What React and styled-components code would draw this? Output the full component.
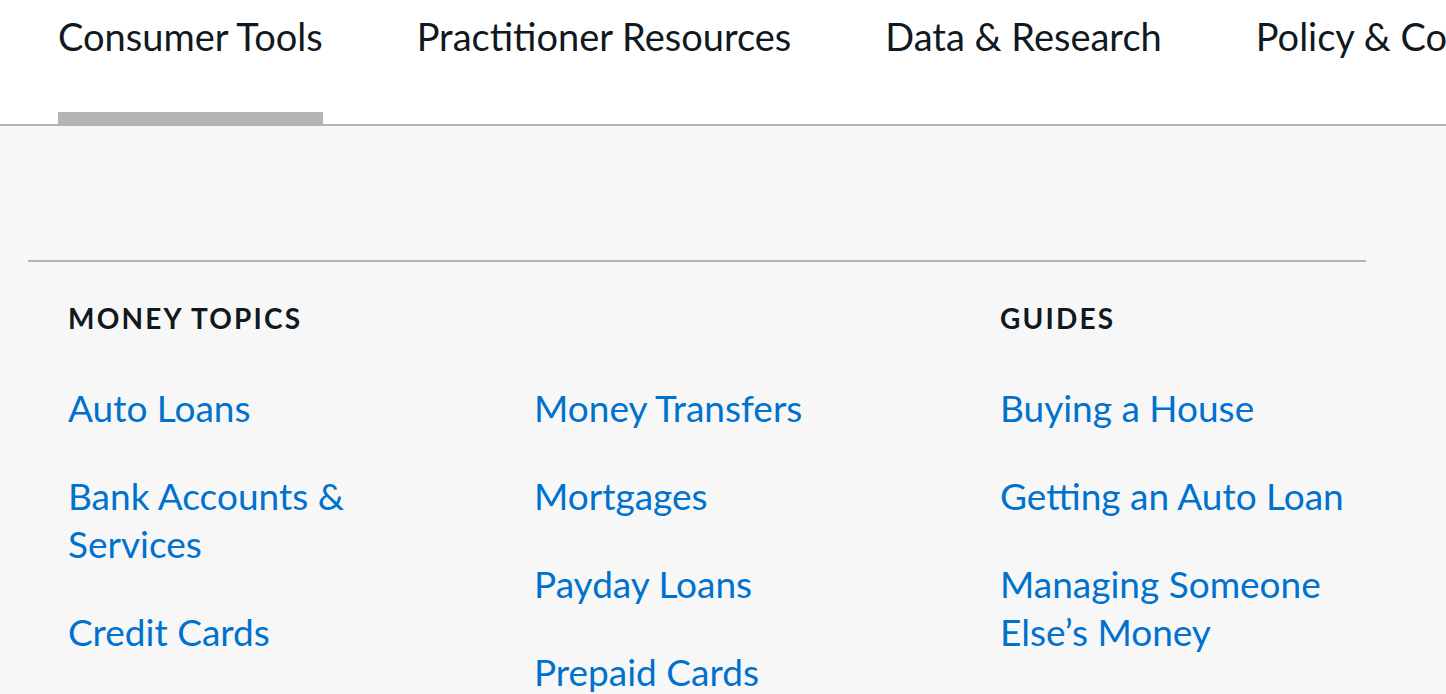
import React from "react";
import styled, { createGlobalStyle } from "styled-components";

const Global = createGlobalStyle`
  html, body { margin: 0; padding: 0; background: #f7f7f7; }
  body { font-family: Lato, "Open Sans", sans-serif; overflow: hidden; }
  * { box-sizing: border-box; }
`;

const Page = styled.div`
  width: 1446px;
  height: 694px;
  overflow: hidden;
  background: #f7f7f7;
`;

const NavBar = styled.nav`
  height: 126px;
  background: #ffffff;
  border-bottom: 2px solid #b4b5b6;
  display: flex;
  gap: 94px;
  padding-left: 58px;
  white-space: nowrap;
  overflow: hidden;
`;

const Tab = styled.a`
  display: flex;
  flex-direction: column;
  height: 124px;
  flex-shrink: 0;
  color: #101820;
  font-size: 38px;
  line-height: 48px;
  padding-top: 12px;
  text-decoration: none;
  &::after {
    content: "";
    display: block;
    margin-top: auto;
    height: 12px;
    background: ${(p) => (p.$active ? "#b4b5b6" : "transparent")};
  }
`;

const Panel = styled.section`
  margin: 0 80px 0 28px;
  padding-top: 134px;
`;

const Rule = styled.div`
  height: 2px;
  background: #b4b5b6;
`;

const Columns = styled.div`
  display: grid;
  grid-template-columns: 360px 360px 360px;
  column-gap: 106px;
  padding: 36px 40px 0;
`;

const Column = styled.div`
  display: flex;
  flex-direction: column;
`;

const Heading = styled.h3`
  margin: 0;
  height: 40px;
  font-size: 28px;
  line-height: 40px;
  font-weight: 700;
  letter-spacing: 2.2px;
  color: #101820;
  text-transform: uppercase;
`;

const List = styled.ul`
  list-style: none;
  margin: 46px 0 0;
  padding: 0;
  display: flex;
  flex-direction: column;
  gap: 40px;
`;

const Link = styled.a`
  display: block;
  font-size: 37px;
  line-height: 48px;
  color: #0072ce;
  text-decoration: none;
`;

const tabs = [
  "Consumer Tools",
  "Practitioner Resources",
  "Data & Research",
  "Policy & Compliance",
];

const columns = [
  {
    heading: "Money Topics",
    links: ["Auto Loans", "Bank Accounts & Services", "Credit Cards"],
  },
  {
    heading: "",
    links: ["Money Transfers", "Mortgages", "Payday Loans", "Prepaid Cards"],
  },
  {
    heading: "Guides",
    links: ["Buying a House", "Getting an Auto Loan", "Managing Someone Else’s Money"],
  },
];

export default function App() {
  return (
    <Page>
      <Global />
      <NavBar>
        {tabs.map((t, i) => (
          <Tab key={t} href="#" $active={i === 0}>
            {t}
          </Tab>
        ))}
      </NavBar>
      <Panel>
        <Rule />
        <Columns>
          {columns.map((c, i) => (
            <Column key={i}>
              <Heading>{c.heading}</Heading>
              <List>
                {c.links.map((l) => (
                  <li key={l}>
                    <Link href="#">{l}</Link>
                  </li>
                ))}
              </List>
            </Column>
          ))}
        </Columns>
      </Panel>
    </Page>
  );
}
